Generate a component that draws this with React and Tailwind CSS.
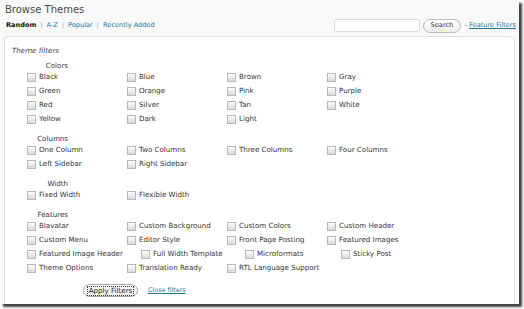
import React from 'react'

const font = { fontFamily: '"DejaVu Sans", Verdana, sans-serif' }

function Item({ label, w = 'w-[100px]' }) {
  return (
    <label className={`${w} shrink-0 flex items-center gap-[3px] h-[14px] leading-[14px]`}>
      <span className="w-[9px] h-[9px] shrink-0 border border-[#b8b8b8] bg-linear-to-b from-[#fbfbfb] to-[#dadada]" />
      <span className="whitespace-nowrap">{label}</span>
    </label>
  )
}

function Row({ children }) {
  return <div className="flex ml-[15px]">{children}</div>
}

function Heading({ children, first }) {
  return (
    <div className={`w-[56px] h-[8px] leading-[8px] text-right ${first ? 'mt-[4px]' : 'mt-[9px]'}`}>
      {children}
    </div>
  )
}

export default function App() {
  return (
    <div className="w-[524px] h-[309px] bg-white" style={font}>
      <div className="w-[519px] h-[304px] bg-[#f9f9f9] overflow-hidden shadow-[3px_3px_2px_rgba(0,0,0,0.75)] pl-[4px]">
        <div className="h-[18px] pt-[3px] pl-[1px] text-[10px] leading-[13px] text-[#4a4a4a]">Browse Themes</div>

        <div className="flex items-center h-[15px] w-[512px] text-[6.6px]">
          <div className="flex items-center gap-[4px] pl-[2px] text-[#999]">
            <span className="font-bold text-[#111]">Random</span>
            <span>|</span>
            <span className="text-[#21759b]">A-Z</span>
            <span>|</span>
            <span className="text-[#21759b]">Popular</span>
            <span>|</span>
            <span className="text-[#21759b]">Recently Added</span>
          </div>
          <div className="ml-auto flex items-center">
            <div className="w-[86px] h-[13px] bg-white border border-[#dcdcdc] rounded-[2px]" />
            <div className="ml-[3px] h-[14px] w-[38px] rounded-full border border-[#bbb] bg-linear-to-b from-white to-[#ececec] flex items-center justify-center text-[#333]">
              Search
            </div>
            <span className="ml-[3px] text-[#555]">–</span>
            <span className="ml-[2px] text-[6.6px] text-[#21759b] underline">Feature Filters</span>
          </div>
        </div>

        <div className="mt-[3px] w-[511px] h-[300px] bg-white border border-[#dfdfdf] rounded-[4px] px-[7px] pt-[7px] text-[7.1px] text-[#333]">
          <div className="h-[14px] leading-[14px] italic text-[#444]">Theme filters</div>

          <Heading first>Colors</Heading>
          <Row><Item label="Black" /><Item label="Blue" /><Item label="Brown" /><Item label="Gray" /></Row>
          <Row><Item label="Green" /><Item label="Orange" /><Item label="Pink" /><Item label="Purple" /></Row>
          <Row><Item label="Red" /><Item label="Silver" /><Item label="Tan" /><Item label="White" /></Row>
          <Row><Item label="Yellow" /><Item label="Dark" /><Item label="Light" /></Row>

          <Heading>Columns</Heading>
          <Row><Item label="One Column" /><Item label="Two Columns" /><Item label="Three Columns" /><Item label="Four Columns" /></Row>
          <Row><Item label="Left Sidebar" /><Item label="Right Sidebar" /></Row>

          <Heading>Width</Heading>
          <Row><Item label="Fixed Width" /><Item label="Flexible Width" /></Row>

          <Heading>Features</Heading>
          <Row><Item label="Blavatar" /><Item label="Custom Background" /><Item label="Custom Colors" /><Item label="Custom Header" /></Row>
          <Row><Item label="Custom Menu" /><Item label="Editor Style" /><Item label="Front Page Posting" /><Item label="Featured Images" /></Row>
          <Row>
            <Item label="Featured Image Header" w="w-[114px]" />
            <Item label="Full Width Template" w="w-[104px]" />
            <Item label="Microformats" w="w-[96px]" />
            <Item label="Sticky Post" />
          </Row>
          <Row><Item label="Theme Options" /><Item label="Translation Ready" /><Item label="RTL Language Support" w="w-[140px]" /></Row>

          <div className="flex items-center mt-[9px] ml-[71px]">
            <div className="h-[13px] w-[55px] rounded-full border border-[#aaa] bg-linear-to-b from-white to-[#efefef] flex items-center justify-center">
              <span className="border border-dotted border-[#333] px-[1px] leading-[8px] text-[#222]">Apply Filters</span>
            </div>
            <span className="ml-[10px] text-[6.4px] text-[#21759b] underline">Close filters</span>
          </div>
        </div>
      </div>
    </div>
  )
}
